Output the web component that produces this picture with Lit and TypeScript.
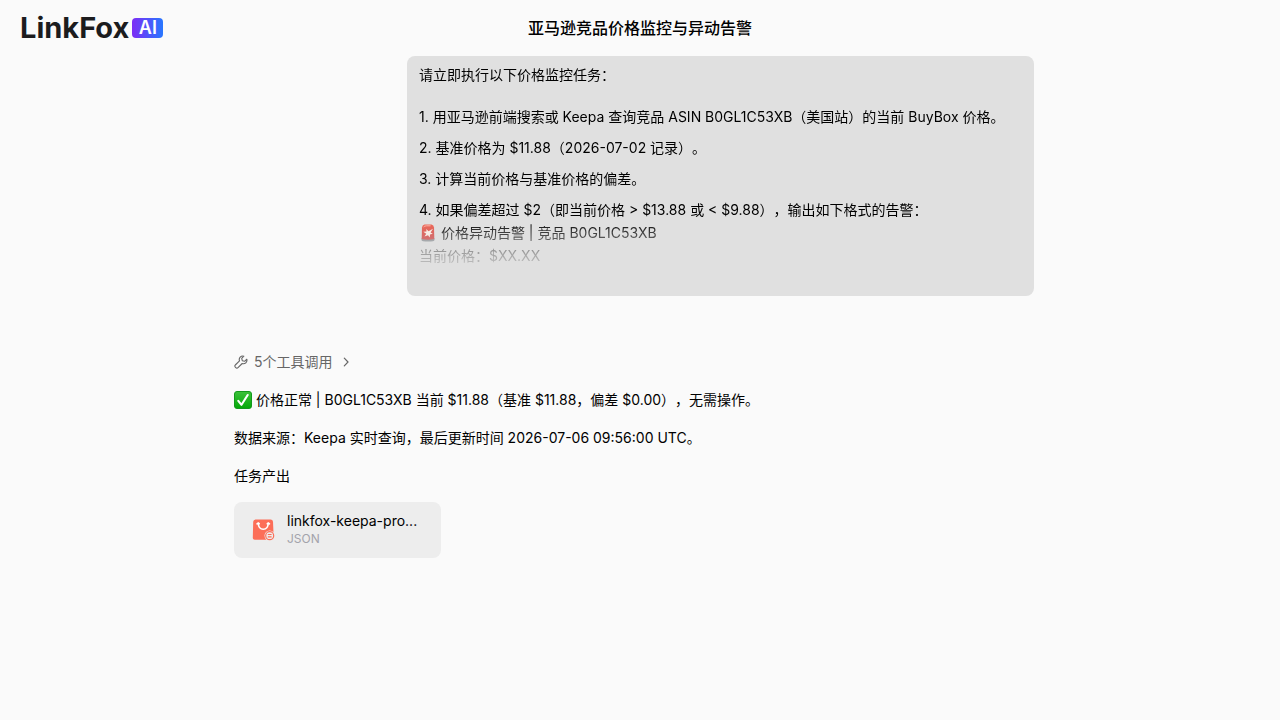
import { LitElement, html, css } from "lit";
import { customElement } from "lit/decorators.js";

const siren = html`<svg class="emoji" viewBox="0 0 18 18" role="img" aria-label="🚨">
  <defs><linearGradient id="red" x1="0" y1="0" x2="0" y2="1">
    <stop offset="0" stop-color="#ee5a48" /><stop offset="1" stop-color="#c81f1f" />
  </linearGradient></defs>
  <path d="M2.500 14.300h13v1.700q0 1.600-6.500 1.600t-6.500-1.600z" fill="#777c82" />
  <path d="M3 3.500Q3.200 1 5.500.6h7Q14.800 1 15 3.500l.3 11.500q-6.300 1.500-12.600 0z" fill="url(#red)" />
  <path d="M4.600 3q1-1.200 3-1.200h4" fill="none" stroke="#ffb3a6" stroke-width=".9" />
  <path d="M9.500 7.200L14 4.800l-2.400 3.700 2.200 1.300-2.800.6-.2 3-1.800-2.200-3.500 1.300 1.700-2.800L4.300 7.800l3.200-.3L7.300 5z" fill="#fff1e8" />
</svg>`;

const check = html`<svg class="emoji" viewBox="0 0 18 18" role="img" aria-label="✅">
  <defs><linearGradient id="green" x1="0" y1="0" x2="0" y2="1">
    <stop offset="0" stop-color="#3cc13a" /><stop offset="1" stop-color="#04a808" />
  </linearGradient></defs>
  <rect x=".5" y=".5" width="17" height="17" rx="2.500" fill="url(#green)" stroke="#139a1c" />
  <path d="M4.300 9.800l3.200 4L13.700 4" fill="none" stroke="#fff" stroke-width="2.100" stroke-linecap="round" stroke-linejoin="round" />
</svg>`;

@customElement("app-root")
export class AppRoot extends LitElement {
  static styles = css`
    :host {
      display: block;
      min-height: 100vh;
      background: #fafafa;
      color: #000;
      font-family: Inter, "Noto Sans CJK SC", sans-serif;
      font-size: 14px;
      line-height: 23px;
      text-spacing-trim: space-all;
    }
    * { box-sizing: border-box; }
    p, h1, h2, ol { margin: 0; padding: 0; font-size: inherit; font-weight: 400; }
    header {
      display: grid;
      grid-template-columns: 1fr auto 1fr;
      align-items: center;
      height: 56px;
      padding: 0 20px;
    }
    .logo {
      display: flex;
      align-items: center;
      gap: 3px;
      color: #1c1c1e;
      text-decoration: none;
      line-height: 20px;
    }
    .word { font-size: 29px; font-weight: 700; }
    .badge {
      width: 31px;
      height: 20px;
      border-radius: 4px;
      background: linear-gradient(90deg, #7d2cf5, #2877ff);
      color: #fff;
      font-size: 18px;
      font-weight: 600;
      text-align: center;
    }
    .title { font-size: 16px; font-weight: 500; line-height: 24px; }
    main { padding-right: 12px; }
    .column { max-width: 800px; margin: 0 auto; }
    .bubble {
      width: fit-content;
      min-width: 627px;
      margin-left: auto;
      padding: 7px 12px 28px;
      border-radius: 8px;
      background: #e0e0e0;
    }
    .clip {
      height: 205px;
      overflow: hidden;
      mask-image: linear-gradient(
        to bottom,
        #000 calc(100% - 48px),
        rgb(0 0 0 / 30%) calc(100% - 16px),
        rgb(0 0 0 / 15%) calc(100% - 4px),
        transparent
      );
    }
    .steps { display: grid; gap: 8px; margin-top: 19px; list-style: none; }
    .emoji { width: 18px; height: 18px; vertical-align: -4px; }
    .reply {
      display: flex;
      flex-direction: column;
      align-items: flex-start;
      gap: 15px;
      margin-top: 54px;
    }
    .tools {
      display: flex;
      align-items: center;
      gap: 6px;
      padding: 0;
      border: 0;
      background: none;
      color: #666;
      font: inherit;
      cursor: pointer;
    }
    .tools svg { width: 14px; height: 14px; fill: none; stroke: currentColor; }
    .file {
      display: flex;
      align-items: center;
      gap: 11px;
      width: 207px;
      height: 56px;
      padding: 0 14px 0 17px;
      border-radius: 8px;
      background: #ededed;
      color: inherit;
      text-decoration: none;
      line-height: 18px;
    }
    .file svg { flex: none; width: 25px; height: 25px; }
    .name, .kind { display: block; white-space: nowrap; }
    .kind { color: #a3a3ab; font-size: 12px; }
  `;

  render() {
    return html`
      <header>
        <a class="logo" href="#"><span class="word">LinkFox</span><span class="badge">AI</span></a>
        <h1 class="title">亚马逊竞品价格监控与异动告警</h1>
      </header>
      <main>
        <div class="column">
          <section class="bubble">
            <div class="clip">
              <p>请立即执行以下价格监控任务：</p>
              <ol class="steps">
                <li>1. 用亚马逊前端搜索或 Keepa 查询竞品 ASIN B0GL1C53XB（美国站）的当前 BuyBox 价格。</li>
                <li>2. 基准价格为 $11.88（2026-07-02 记录）。</li>
                <li>3. 计算当前价格与基准价格的偏差。</li>
                <li>4. 如果偏差超过 $2（即当前价格 &gt; $13.88 或 &lt; $9.88），输出如下格式的告警：<br />${siren} 价格异动告警 | 竞品 B0GL1C53XB<br />当前价格：$XX.XX</li>
              </ol>
            </div>
          </section>
          <section class="reply">
            <button class="tools" type="button">
              <svg viewBox="0 0 14 14" stroke-width="1.100" stroke-linejoin="round" aria-hidden="true">
                <path d="M9.800 1.200a3.500 3.500 0 0 0-4.300 4.600L1.300 10a1.500 1.500 0 0 0 0 2.200l.5.500a1.500 1.500 0 0 0 2.200 0l4.200-4.200a3.500 3.500 0 0 0 4.600-4.300L10.600 6.300 8.300 5.700 7.700 3.400z" />
              </svg>
              <span>5个工具调用</span>
              <svg viewBox="0 0 14 14" stroke-width="1.200" stroke-linecap="round" stroke-linejoin="round" aria-hidden="true">
                <path d="M5.300 3.200L9 7l-3.700 3.800" />
              </svg>
            </button>
            <p>${check} 价格正常 | B0GL1C53XB 当前 $11.88（基准 $11.88，偏差 $0.00），无需操作。</p>
            <p>数据来源：Keepa 实时查询，最后更新时间 2026-07-06 09:56:00 UTC。</p>
            <h2>任务产出</h2>
            <a class="file" href="#">
              <svg viewBox="0 0 25 25" aria-hidden="true">
                <path d="M4.500 1.500h15a2.500 2.500 0 0 1 2.500 2.300l.7 15.700a2 2 0 0 1-2 2.200H3.800a2 2 0 0 1-2-2.200L2.200 3.800a2.500 2.500 0 0 1 2.300-2.300z" fill="#fc6e58" />
                <path d="M7.200 5.200c.6 8 9.500 8 10.100 0M6 5.800l1.200-.8 1 .7M16.300 5.700l1-.7 1.200.8" fill="none" stroke="#fff" stroke-width="1.600" stroke-linecap="round" />
                <circle cx="18.700" cy="17.700" r="5.200" fill="#ededed" />
                <circle cx="18.700" cy="17.700" r="4" fill="none" stroke="#fc6e58" stroke-width="1.200" />
                <path d="M16.800 16.500h3.800M16.800 18.900h3.800" stroke="#fc6e58" stroke-width="1.200" />
              </svg>
              <span>
                <span class="name">linkfox-keepa-pro...</span>
                <span class="kind">JSON</span>
              </span>
            </a>
          </section>
        </div>
      </main>
    `;
  }
}
